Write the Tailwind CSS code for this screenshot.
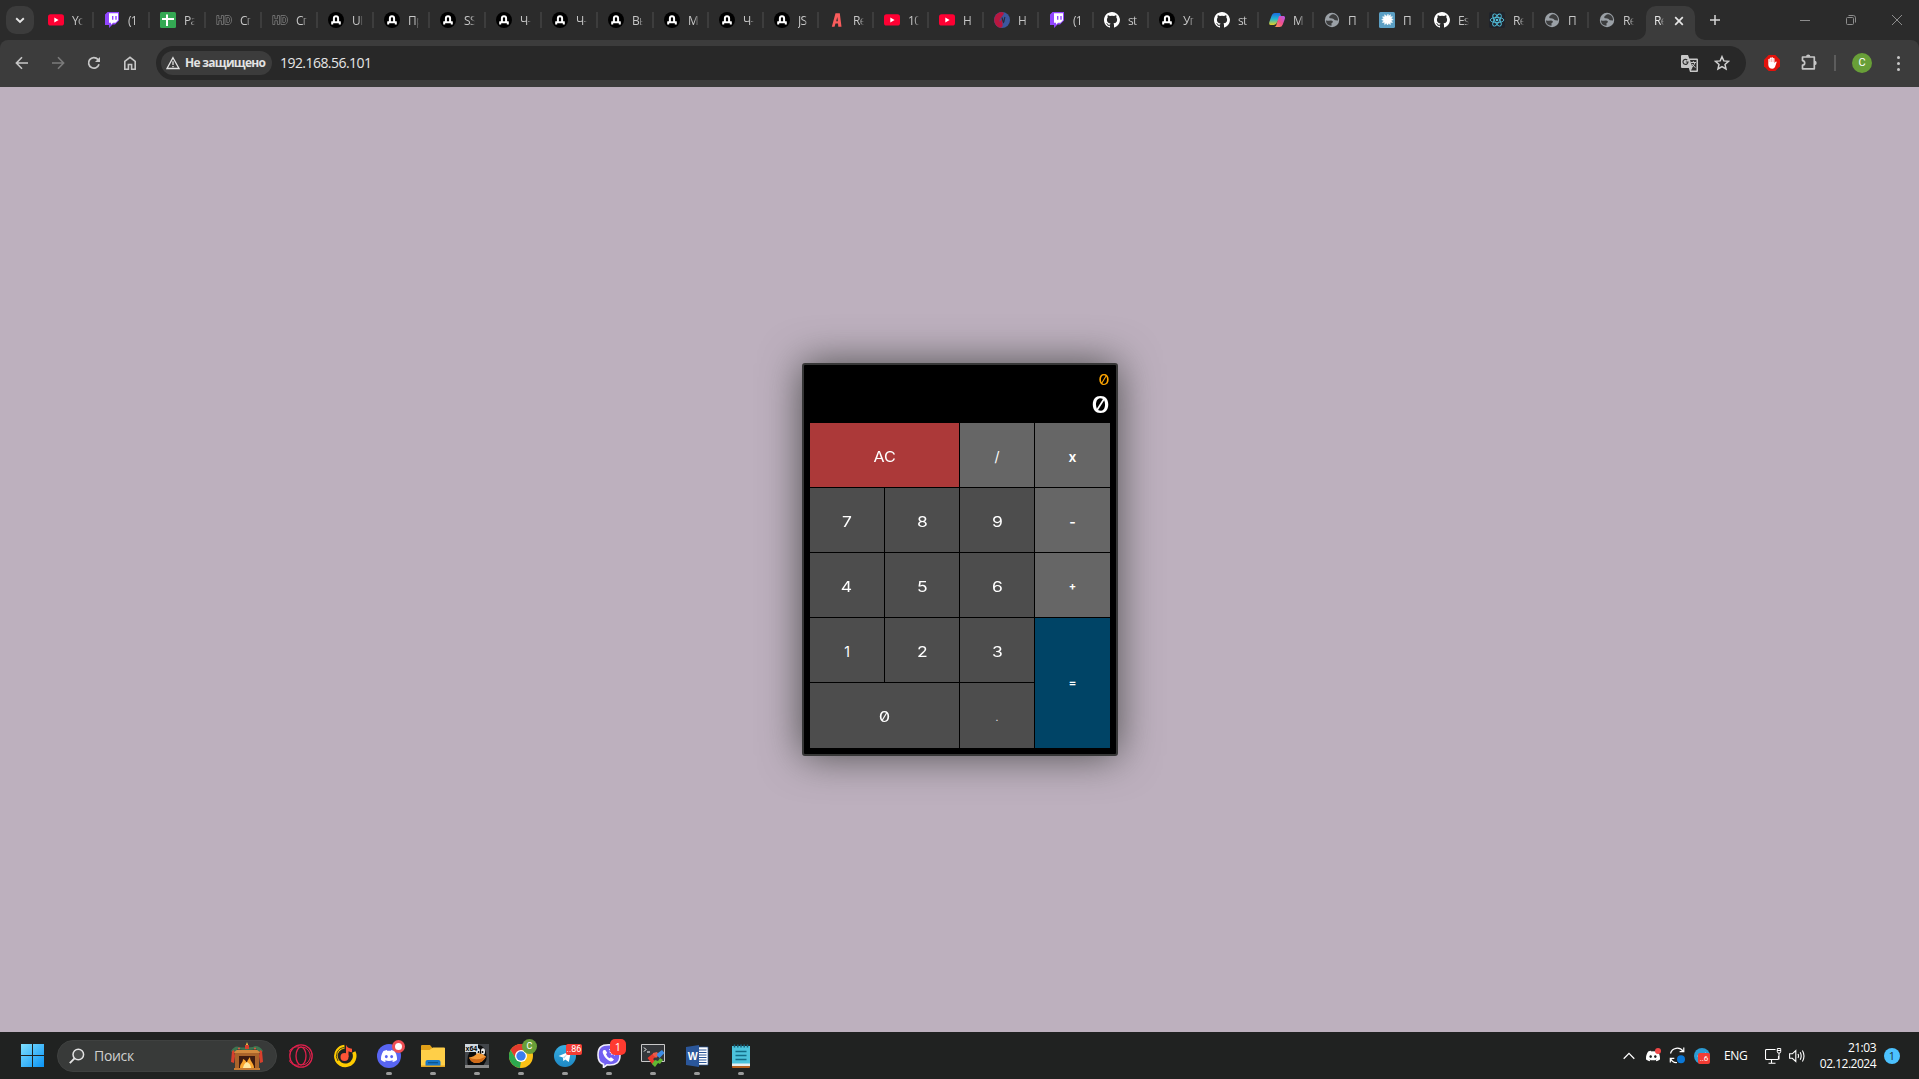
<!DOCTYPE html>
<html lang="ru">
<head>
<meta charset="utf-8">
<title>React Calculator</title>
<script src="https://cdn.jsdelivr.net/npm/@tailwindcss/browser@4"></script>
</head>
<body class="w-[1919px] h-[1079px] overflow-hidden flex flex-col bg-[#bdb0be] font-['Open_Sans','Noto_Sans',sans-serif]">
<svg class="absolute size-0">
  <defs>
    <linearGradient id="win" x1="0" y1="0" x2="1" y2="1"><stop offset="0" stop-color="#7fe0ff"/><stop offset="1" stop-color="#0a93f5"/></linearGradient>
    <linearGradient id="cpa" x1="0" y1="0" x2="0" y2="1"><stop offset="0" stop-color="#1a6be0"/><stop offset=".5" stop-color="#22b6d0"/><stop offset="1" stop-color="#e8d020"/></linearGradient>
    <linearGradient id="cpb" x1="1" y1="0" x2="0" y2="1"><stop offset="0" stop-color="#b05af0"/><stop offset=".5" stop-color="#f0508c"/><stop offset="1" stop-color="#ffa050"/></linearGradient>
    <linearGradient id="tg" x1="0" y1="0" x2="0" y2="1"><stop offset="0" stop-color="#37aee2"/><stop offset="1" stop-color="#1e88c4"/></linearGradient>
    <symbol id="yt" viewBox="0 0 16 16"><rect y="2.2" width="16" height="11.4" rx="2.6" fill="#ff0033"/><path d="M6.3 5.6 10.6 8l-4.300 2.400z" fill="#fff"/></symbol>
    <symbol id="tw" viewBox="0 0 16 16"><path d="M1 2.500 3.500 0H15v8.500l-4 4H8.500L5 16v-3H1z" fill="#9146ff"/><path d="M5 1.200h9v7l-2.500 2.500H9L7 12.700v-2H5z" fill="#fff"/><path d="M8 4h1.400v3.800H8zM11.300 4h1.400v3.800h-1.400z" fill="#9146ff"/></symbol>
    <symbol id="sh" viewBox="0 0 16 16"><rect width="16" height="16" rx="1.500" fill="#34a853"/><path d="M6 2.500h2V6h6v2H8v6H6V8H2V6h4z" fill="#fff"/></symbol>
    <symbol id="hd" viewBox="0 0 16 16"><path d="M.8 3.500h2v3.300h2.600V3.500h2v9h-2V8.700H2.800v3.800h-2zM9 3.500h3c2.200 0 3.500 1.600 3.500 4.500s-1.300 4.500-3.500 4.500H9zm1.800 1.800v5.400H12c1.200 0 1.700-1 1.700-2.700S13.200 5.300 12 5.300z" fill="#222" stroke="#808080" stroke-width=".8"/></symbol>
    <symbol id="d" viewBox="0 0 16 16"><circle cx="8" cy="8" r="8" fill="#000"/><path d="M4.200 12.400V9.600M11.800 12.400V9.600M3.500 10.300h9M5.900 10V6.200q0-2 2.100-2t2.100 2V10" fill="none" stroke="#fff" stroke-width="2"/></symbol>
    <symbol id="ra" viewBox="0 0 16 16"><path d="M6.500 1.300h4.300l1.700 13.400H9.300L9 11.500H6.500l-1 3.200H2.800zM8.300 5 7.200 9.200h1.700z" fill="#fa5c5c"/></symbol>
    <symbol id="hn" viewBox="0 0 16 16"><circle cx="8" cy="8" r="8" fill="#3c579f"/><path d="M8 0a8 8 0 0 0-2 15.700c2 .2 3-1.500 2.500-4L8 6.500c-1 1-1.500 3-2.500 3C5.500 6 9 4.500 10 1z" fill="#b8173f"/><path d="M8 5.500c.5 2 1 4 1.500 5C10.500 9 10 7 11 5" fill="none" stroke="#282b38" stroke-width="1.100"/></symbol>
    <symbol id="gh" viewBox="0 0 16 16"><path fill="#fff" d="M8 0C3.580 0 0 3.580 0 8c0 3.540 2.290 6.530 5.470 7.590.4.070.55-.17.55-.38v-1.490c-2.230.48-2.700-.95-2.700-.95-.36-.93-.89-1.170-.89-1.170-.73-.5.050-.49.050-.49.8.060 1.230.82 1.230.82.720 1.230 1.870.87 2.330.67.070-.52.280-.88.510-1.080-1.780-.2-3.640-.89-3.640-3.950 0-.87.310-1.590.820-2.150-.08-.2-.36-1.020.080-2.120 0 0 .670-.21 2.200.820a7.600 7.600 0 0 1 4 0c1.530-1.040 2.200-.82 2.200-.82.440 1.100.160 1.920.080 2.120.510.560.820 1.270.820 2.150 0 3.070-1.870 3.750-3.650 3.950.290.250.540.730.540 1.480v2.190c0 .21.150.46.550.38A8 8 0 0 0 8 0z"/></symbol>
    <symbol id="cp" viewBox="0 0 16 16"><path d="M6 1h5l1 3-5 8-2 1H1.500C0 13 0 11.500.3 10L2.500 4Q3.500 1 6 1z" fill="url(#cpa)"/><path d="M10 4h4.300c1.700 0 2 1.500 1.500 3l-2 5.500q-1 2.500-3.300 2.500H5.500c1.500-.5 1.700-1.500 2-2.500z" fill="url(#cpb)"/></symbol>
    <symbol id="gl" viewBox="0 0 16 16"><circle cx="8" cy="8" r="7.200" fill="#9aa0a6"/><path d="M2 8.600C4 9 6.500 8 8 8.700c1.800.8.500 2-.5 2.600v2.500C4 13.800 2 11.500 2 8.600zM8.500 2.300C7 3 5 4.200 5.200 5.500c.3 1.400 2.800.6 4 1.200 1 .7 1.300 1.700 2.800 1.600.9 0 1.700.4 2 .2C14.300 5 12 2.300 8.500 2.300z" fill="#2b2b2b" opacity=".85"/></symbol>
    <symbol id="vi" viewBox="0 0 16 16"><rect width="16" height="16" rx="1.500" fill="#5b9fc4"/><path d="m8 4 1-1.800.6 2 1.900-1.500-.3 2.200 2.300-.2-1.300 1.800 2 1.200-2.200.8 1.500 1.900-2.300-.1.200 2.300-1.900-1.400L8.600 13 7.500 11l-1.800 1.500v-2.200l-2.300.2 1.300-1.800-2-1.200 2.100-.8-1.300-1.900 2.300.1-.1-2.200 1.800 1.500z" fill="#fff" stroke="#fff" stroke-width=".6"/></symbol>
    <symbol id="re" viewBox="0 0 16 16"><rect width="16" height="16" rx="2" fill="#20232a"/><g fill="none" stroke="#53c1de" stroke-width=".9"><ellipse cx="8" cy="8" rx="6.800" ry="2.600"/><ellipse cx="8" cy="8" rx="6.800" ry="2.600" transform="rotate(60 8 8)"/><ellipse cx="8" cy="8" rx="6.800" ry="2.600" transform="rotate(120 8 8)"/></g><circle cx="8" cy="8" r="1.300" fill="#53c1de"/></symbol>
    <symbol id="disc" viewBox="0 0 24 24"><path fill="#fff" d="M20.300 4.400A19.800 19.800 0 0 0 15.400 2.900l-.6 1.300a18 18 0 0 0-5.500 0L8.600 2.900a19.700 19.700 0 0 0-4.900 1.500C.5 9-.3 13.600.1 18.100a19.900 19.900 0 0 0 6 3l1.300-2-1.900-.9.400-.3a14.200 14.200 0 0 0 12.200 0l.4.300-1.900.9 1.300 2a19.800 19.800 0 0 0 6-3c.500-5.200-.8-9.700-3.600-13.700zM8 15.300c-1.200 0-2.200-1.100-2.200-2.400s1-2.400 2.200-2.400 2.200 1.100 2.200 2.400-1 2.400-2.200 2.400zm8 0c-1.200 0-2.200-1.100-2.200-2.400s1-2.400 2.200-2.400 2.200 1.100 2.200 2.400-1 2.400-2.200 2.400z"/></symbol>
  </defs>
</svg>

<!-- tab strip -->
<header class="h-10 shrink-0 bg-[#2b2b2b] flex">
  <div class="w-[38px] pl-[6px] pt-[6px]"><div class="size-7 rounded-[10px] bg-[#3c3c3c] flex items-center justify-center"><svg class="size-3" viewBox="0 0 12 12"><path d="m2.200 4.200 3.800 3.700 3.800-3.700" fill="none" stroke="#e6e6e6" stroke-width="1.900"/></svg></div></div>
  <div id="tabs" class="flex"></div>
  <div class="relative ml-[29px] w-[49px] h-10 pt-[6px]">
    <div class="h-[34px] w-full rounded-t-[10px] bg-[#3c3c3c] flex items-center pb-[5px] pl-[8px]">
      <span class="w-[10px] overflow-hidden whitespace-nowrap text-xs tracking-[-0.7px] text-[#e8e8e8] mask-r-from-60%">React</span>
      <svg class="ml-[10px] size-[10px]" viewBox="0 0 10 10"><path d="m1.200 1.200 7.600 7.600m0-7.600L1.200 8.800" stroke="#e6e6e6" stroke-width="1.700"/></svg>
    </div>
    <svg class="absolute -left-[10px] bottom-0 size-[10px]" viewBox="0 0 10 10"><path d="M10 0v10H0A10 10 0 0 0 10 0" fill="#3c3c3c"/></svg>
    <svg class="absolute -right-[10px] bottom-0 size-[10px]" viewBox="0 0 10 10"><path d="M0 0v10h10A10 10 0 0 1 0 0" fill="#3c3c3c"/></svg>
  </div>
  <svg class="ml-[15px] mt-[15px] size-[10px]" viewBox="0 0 10 10"><path d="M5 0v10M0 5h10" stroke="#d6d6d6" stroke-width="1.500"/></svg>
  <div class="ml-auto flex pt-[15px] pr-[17px] gap-9 text-[#8d8d8d]">
    <svg class="size-[10px]" viewBox="0 0 10 10"><path d="M0 5.500h10" stroke="currentColor"/></svg>
    <svg class="size-[10px]" viewBox="0 0 10 10"><path d="M.5 3.500q0-1 1-1h5q1 0 1 1v5q0 1-1 1h-5q-1 0-1-1zM2.500.5h4.700q2.300 0 2.300 2.300v4.700" fill="none" stroke="currentColor"/></svg>
    <svg class="size-[10px]" viewBox="0 0 10 10"><path d="m0 0 10 10M10 0 0 10" stroke="currentColor"/></svg>
  </div>
</header>

<!-- address bar -->
<div class="h-[47px] shrink-0 bg-[#2b2b2b]">
  <div class="h-full bg-[#3c3c3c] rounded-t-lg flex items-center pb-[1px]">
    <svg class="ml-[15px] size-[14px] text-[#c7c7c7]" viewBox="0 0 14 14"><path d="M13 7H1.500M7 1.300 1.400 7 7 12.700" fill="none" stroke="currentColor" stroke-width="1.600"/></svg>
    <svg class="ml-[22px] size-[14px] text-[#7b7b7b]" viewBox="0 0 14 14"><path d="M1 7h11.500M7 1.300 12.600 7 7 12.700" fill="none" stroke="currentColor" stroke-width="1.600"/></svg>
    <svg class="ml-[22px] size-[14px] text-[#c7c7c7]" viewBox="0 0 14 14"><path d="M12 8.300A5.300 5.300 0 1 1 10.900 3.400L12.500 5" fill="none" stroke="currentColor" stroke-width="1.700"/><path d="M13 1v5H8z" fill="currentColor"/></svg>
    <svg class="ml-[22px] size-[14px] text-[#c7c7c7]" viewBox="0 0 14 14"><path d="M1.800 13.200V5.300L7 1.300l5.200 4v7.900H8.600V8.500H5.400v4.700z" fill="none" stroke="currentColor" stroke-width="1.600"/></svg>
    <div class="ml-[19px] h-[34px] w-[1590px] rounded-full bg-[#282828] flex items-center pl-[5px]">
      <div class="h-6 w-[111px] rounded-full bg-[#3c3c3c] flex items-center pl-[5px] text-[#e3e3e3]">
        <svg class="size-[14px]" viewBox="0 0 14 14"><path d="M7 1.700 13 12.500H1z" fill="none" stroke="currentColor" stroke-width="1.300"/><path d="M7 5.300v3.600M7 9.900v1.400" stroke="currentColor" stroke-width="1.300"/></svg>
        <span class="ml-[5px] text-xs font-bold tracking-[-0.7px] whitespace-nowrap">Не защищено</span>
      </div>
      <span class="ml-2 text-sm tracking-[-0.55px] text-[#e6e6e6]">192.168.56.101</span>
      <svg class="ml-auto mr-[16px] size-[17px]" viewBox="0 0 17 17"><path d="M1 0h6l1.300 3.500H16q1 0 1 1V16q0 1-1 1H9l-1.200-4H1q-1 0-1-1V1q0-1 1-1z" fill="#c7c7c7"/><path d="M9 5h6.500v10.500H10l1.500-3z" fill="#303030"/><path d="M6.200 5A2.500 2.500 0 1 0 7 7H4.800" fill="none" stroke="#303030" stroke-width="1.200"/><path d="M10 7.500h5M12.400 6.200v1.300M14 7.500q-.7 2.700-3 4.500M11 9q1 2 3.500 3.500" fill="none" stroke="#c7c7c7"/></svg>
      <svg class="mr-[16px] size-[16px]" viewBox="0 0 16 16"><path d="m8 1.700 1.800 4.200 4.700.4-3.500 3.100 1 4.500-4-2.400-4 2.400 1-4.500L1.500 6.300l4.700-.4z" fill="none" stroke="#d0d0d0" stroke-width="1.500"/></svg>
    </div>
    <svg class="ml-[18px] size-4" viewBox="0 0 16 16"><path d="M4.700 0h6.600L16 4.700v6.600L11.300 16H4.700L0 11.300V4.700z" fill="#e3120b"/><path d="M4.300 8.500V4.200q.8-.9 1.500 0V3q.8-1 1.600-.2Q8 1.700 9 2.500v.8q.9-.8 1.500.2V8l1-1.300q1.200-.5 1.200.4L11 12q-.8 1.700-2.600 1.700Q4.600 13.600 4.300 10z" fill="#fff"/><path d="M5.900 4v3M7.500 3.500V7M9.100 3.500V7" stroke="#e3120b" stroke-width=".3"/></svg>
    <svg class="ml-[20px] size-[18px]" viewBox="0 0 18 18"><path d="M2.500 3h11.800v11.800H2.500v-3.600q2.200-.3 2.200-2.300T2.500 6.600z" fill="none" stroke="#c7c7c7" stroke-width="1.700" stroke-linejoin="round"/><path d="M6 2.800a2.200 2.200 0 0 1 4.400 0zM14.500 6.700a2.200 2.200 0 0 1 0 4.400z" fill="#c7c7c7"/></svg>
    <div class="ml-[16px] w-[2px] h-4 bg-[#5c5c5c]"></div>
    <div class="ml-[16px] size-5 rounded-full bg-[#689f38] text-white text-[11px] leading-5 text-center font-['Roboto',sans-serif]">C</div>
    <div class="ml-[25px] flex flex-col gap-[3px]"><i class="size-[3px] rounded-full bg-[#c7c7c7]"></i><i class="size-[3px] rounded-full bg-[#c7c7c7]"></i><i class="size-[3px] rounded-full bg-[#c7c7c7]"></i></div>
  </div>
</div>

<!-- page -->
<main class="h-[945px] shrink-0 flex items-start justify-center pt-[276px] pl-[1px]">
  <div class="w-[316px] h-[393px] rounded-[3px] border-2 border-[#373737] bg-black px-[6px] shadow-[0_0_40px_#4d4d4d] text-white font-['Inter',sans-serif] slashed-zero">
    <div class="h-[58px] pt-[8px] flex flex-col items-end">
      <div class="h-[14px] text-[14px] leading-[14px] text-[#ffa500] scale-x-130 origin-right">0</div>
      <div class="mt-[6px] h-[24px] text-[23px] leading-[24px] font-medium scale-x-125 origin-right">0</div>
    </div>
    <div id="keys" class="grid grid-cols-[repeat(4,75px)] grid-rows-[repeat(5,65px)] text-sm"></div>
  </div>
</main>

<!-- taskbar -->
<footer class="h-[47px] shrink-0 bg-[#202221] flex items-center pl-[21px] text-white">
  <svg class="size-[23px]" viewBox="0 0 23 23"><path d="M0 0h11v11H0zM12 0h11v11H12zM0 12h11v11H0zM12 12h11v11H12z" fill="url(#win)"/></svg>
  <div class="ml-[13px] h-8 w-[220px] rounded-full bg-[#383a39] border border-[#3f4140] flex items-center pl-[11px] pr-[11px]">
    <svg class="size-4" viewBox="0 0 16 16"><circle cx="9.300" cy="6.500" r="5.300" fill="#4b4d4c" stroke="#e4e4e4" stroke-width="1.500"/><path d="m5.500 10.400-4.700 4.700" stroke="#e4e4e4" stroke-width="1.900"/></svg>
    <span class="ml-[9px] text-[14px] tracking-[-0.3px] text-[#cfcfcf]">Поиск</span>
    <svg class="ml-auto w-[36px] h-[28px]" viewBox="0 0 36 28"><path d="M6 10h24v17H6z" fill="#a9642b"/><path d="M5 8h26v3H5z" fill="#d28a3e"/><path d="M10 14h16v12H10z" fill="#3e1b10"/><path d="M11 26c0-5 3-5 3-9 3 1 3 3 4 4 0-3 2-4 3-6 0 5 4 6 4 11z" fill="#f9a52e"/><path d="M14 26q1-5 4-6 4 2 4 6z" fill="#ffe9a0"/><path d="M5 26h26v2H5z" fill="#c77b32"/><path d="M2 9q4-6 8-4 5 1 8 0 5 1 8-1 5 0 8 5l-2 2-5-4q-9 2-18 0l-5 4z" fill="#3d7550"/><path d="m3 9 2-1 1 6-1 7-3-1zM33 9l-2-1-1 6 1 7 3-1zM16 3h4v4h-4z" fill="#d8402c"/><path d="m18 0 1 3h-2z" fill="#ffcf4a"/><g fill="#e7573e"><circle cx="10" cy="6.500" r="1"/><circle cx="26" cy="6.500" r="1"/></g></svg>
  </div>
  <div class="ml-[2px] flex" id="apps">
    <div class="relative w-11 h-[47px] flex justify-center pt-[12px]"><svg class="size-6" viewBox="0 0 24 24"><g fill="none" stroke="#e0204c" stroke-width="1.300"><circle cx="12" cy="12" r="11.200"/><ellipse cx="12" cy="12" rx="5" ry="9"/><path d="M10 3a9.200 9.200 0 1 0 0 18M14 3a9.200 9.200 0 0 1 0 18" stroke-width="1"/></g></svg></div>
    <div class="relative w-11 h-[47px] flex justify-center pt-[12px]"><svg class="size-6" viewBox="0 0 24 24"><path d="M11.500 2.600A9.400 9.400 0 1 0 20.800 8" fill="none" stroke="#fc0" stroke-width="3.600"/><path d="M11.500 3.500A8.500 8.500 0 0 0 5 17" fill="none" stroke="#202221" stroke-width=".8"/><circle cx="11.500" cy="13" r="4" fill="#ff5436"/><path d="M13 13V0.800q1 3.500 6 4v3.500q-2 0-3.500-1V13z" fill="#ff5436"/></svg></div>
    <div class="relative w-11 h-[47px] flex justify-center pt-[12px]"><div class="size-6 rounded-full bg-[#5865f2] flex items-center justify-center"><svg class="size-4"><use href="#disc"/></svg></div><div class="absolute left-[25px] top-[8px] size-[13px] rounded-full bg-[#ed4f54] flex items-center justify-center"><i class="size-[7px] rounded-full bg-white"></i></div><i class="absolute left-[19px] top-[40px] w-[6px] h-[3px] rounded-full bg-[#9a9a9a]"></i></div>
    <div class="relative w-11 h-[47px] flex justify-center pt-[12px]"><svg class="size-6" viewBox="0 0 24 24"><path d="M0 2q0-1 1-1h8l2.500 3H23q1 0 1 1v6H0z" fill="#e0a018"/><path d="M0 6h8.500L12 3.500h11q1 0 1 1V22H0z" fill="#ffcf48"/><path d="M4.500 22v-4q0-2 2-2h11q2 0 2 2v4z" fill="#1877c8"/><path d="M7 18h10v1.300H7z" fill="#0b568f"/><path d="M0 21.500h24V23H0z" fill="#e5a520"/></svg><i class="absolute left-[19px] top-[40px] w-[6px] h-[3px] rounded-full bg-[#9a9a9a]"></i></div>
    <div class="relative w-11 h-[47px] flex justify-center pt-[12px]"><svg class="size-6" viewBox="0 0 24 24"><rect width="24" height="24" fill="#43474b"/><path d="M3 22Q1 14 5 7l4-5q6-3 10 2 4 6 2 13l-3 5z" fill="#0c0c0c"/><ellipse cx="13" cy="7.500" rx="2" ry="3.300" fill="#eee"/><ellipse cx="18" cy="7.500" rx="2" ry="3.300" fill="#eee"/><circle cx="13.500" cy="8" r="1"/><circle cx="17.500" cy="8" r="1"/><path d="M4 13.500q5-.5 8-4 4-1 9 3-3 6-9 6.500Q6 19 4 13.500z" fill="#f39a38"/><path d="M4 13.500q8 4 17-1-3 6-9 6.500Q6 19 4 13.500z" fill="#d06a18"/><path d="M0 21h24v3H0z" fill="#8a8a8a"/><rect width="13" height="8" fill="#cfd8df"/><text x=".5" y="7" font-size="7" font-weight="700" font-family="Liberation Sans">x64</text></svg><i class="absolute left-[19px] top-[40px] w-[6px] h-[3px] rounded-full bg-[#9a9a9a]"></i></div>
    <div class="relative w-11 h-[47px] flex justify-center pt-[12px]"><svg class="size-6" viewBox="0 0 24 24"><circle cx="12" cy="12" r="12" fill="#fbc116"/><path d="M1.600 6A12 12 0 0 1 22.400 6H12L7 15z" fill="#e33b2e"/><path d="M1.600 6 7 15l5 3-1 6A12 12 0 0 1 1.600 6z" fill="#2da94f"/><path d="m7 15 5 3.500L11.500 24l6-9z" fill="#fbc116"/><circle cx="12" cy="12" r="6" fill="#fff"/><circle cx="12" cy="12" r="4.700" fill="#3b7ded"/></svg><div class="absolute left-[23px] top-[7px] size-[15px] rounded-full bg-[#689f38] text-[9px] leading-[15px] text-center font-['Roboto',sans-serif]">C</div><i class="absolute left-[19px] top-[40px] w-[6px] h-[3px] rounded-full bg-[#9a9a9a]"></i></div>
    <div class="relative w-11 h-[47px] flex justify-center pt-[13px]"><svg class="size-[22px]" viewBox="0 0 22 22"><circle cx="11" cy="11" r="11" fill="url(#tg)"/><path d="m4.500 11 12.500-5-2.200 11-3.600-2.600-1.800 1.800-.5-3.600z" fill="#fff"/><path d="m8.900 12.600 5-4-3.700 5z" fill="#b9d8ec"/></svg><div class="absolute left-[23px] top-[12px] w-4 h-[11px] rounded-[2px] bg-[#f23c34] text-[9px] leading-[11px] text-center font-['Roboto',sans-serif]">..86</div><i class="absolute left-[19px] top-[40px] w-[6px] h-[3px] rounded-full bg-[#9a9a9a]"></i></div>
    <div class="relative w-11 h-[47px] flex justify-center pt-[12px]"><svg class="size-6" viewBox="0 0 24 24"><path d="M12 .8C4 .8 1 3.500 1 11c0 5 1.500 8 5.500 9.200v3.300l3.500-2.700c9 .8 13-1.800 13-9.800S20 .8 12 .8z" fill="#7360f2" stroke="#f1effe" stroke-width="1.600"/><path d="M7 6q-2 1-1 3.500Q8 15 13.500 17.500q2 .5 3.500-2l-3-2.300-1.500 1Q10 13 9 10.300l1.200-1.500L8.300 6z" fill="#fff"/><path d="M12 5.500q5 .5 5.500 6M12.500 8q2.300.3 2.600 3" fill="none" stroke="#fff"/></svg><div class="absolute left-[23px] top-[7px] size-4 rounded-[5px] bg-[#ff3b30] text-[11px] leading-4 text-center">1</div><i class="absolute left-[19px] top-[40px] w-[6px] h-[3px] rounded-full bg-[#9a9a9a]"></i></div>
    <div class="relative w-11 h-[47px] flex justify-center pt-[12px]"><svg class="size-6" viewBox="0 0 24 24"><path d="M.5.500h23v17H.5z" fill="#34373a" stroke="#c8c8c8"/><path d="m3 3.500 2 2-2 2M6 8h3" fill="none" stroke="#fff"/><path d="m6.500 14 5.500-4.500 3 3L12 15l2.500 3-3 2.500z" fill="#e9392c"/><path d="m12 9 4-1 2 3-3 3-3-3z" fill="#e95a4a"/><path d="m17 9 4-3 2.500 3-5 5-3-3z" fill="#3c8de6"/><path d="m11 20 3-4 3 1 2-3 3 2-3 4-2-1-3 4z" fill="#62b832"/></svg><i class="absolute left-[19px] top-[40px] w-[6px] h-[3px] rounded-full bg-[#9a9a9a]"></i></div>
    <div class="relative w-11 h-[47px] flex justify-center pt-[12px]"><svg class="size-6" viewBox="0 0 24 24"><path d="M12 3h11v18H12z" fill="#fff" stroke="#2b579a" stroke-width=".7"/><path d="M14 6h7.500M14 8.500h7.500M14 11h7.500M14 13.500h7.500M14 16h7.500M14 18.500h7.500" stroke="#2b579a" stroke-width="1.200"/><path d="m1 3 13-2v22L1 21z" fill="#2b579a"/><text x="2.800" y="16" font-size="10.500" font-weight="700" fill="#fff" font-family="Liberation Sans">W</text></svg><i class="absolute left-[19px] top-[40px] w-[6px] h-[3px] rounded-full bg-[#9a9a9a]"></i></div>
    <div class="relative w-11 h-[47px] flex justify-center pt-[12px]"><svg class="size-6" viewBox="0 0 24 24"><path d="M3 2h18v20H3z" fill="#4cc3dc"/><path d="M3 20.500h18V23q0 1-1 1H4q-1 0-1-1z" fill="#b5601f"/><path d="M3 19.500h18V22H3z" fill="#e7eef0"/><path d="M6.500 7.500h11M6.500 11.500h11M6.500 15.500h11" stroke="#136c86" stroke-width="1.600" fill="none"/><path d="M5.500.5v3M8.800.5v3M12 .5v3M15.200.5v3M18.500.5v3" stroke="#17637b" stroke-width="1.500"/></svg><i class="absolute left-[19px] top-[40px] w-[6px] h-[3px] rounded-full bg-[#9a9a9a]"></i></div>
  </div>
  <div class="ml-auto flex items-center pr-[19px]">
    <svg class="w-3 h-2" viewBox="0 0 12 8"><path d="m.7 6.700 5.300-5.300 5.300 5.300" fill="none" stroke="#fff" stroke-width="1.300"/></svg>
    <div class="relative ml-[11px] size-[14px]"><svg class="size-full"><use href="#disc"/></svg><i class="absolute left-[9px] -top-[1px] size-[6px] rounded-full bg-[#f04747]"></i></div>
    <svg class="ml-[9px] size-[17px]" viewBox="0 0 17 17"><path d="M1.500 6.500A7 7 0 0 1 14 4.200M14.800.5v4.200h-4.200M1.300 15.500v-4.200h4M1.500 11.500Q3.500 16 8 15.500" fill="none" stroke="#fff" stroke-width="1.200"/><circle cx="12" cy="12.300" r="4" fill="#0a78d7"/></svg>
    <div class="relative ml-[8px] size-4 rounded-full bg-[#2c9bd3]"><svg class="size-4" viewBox="0 0 16 16"><path d="m3 8 9-3.500-2 7z" fill="#fff"/></svg><div class="absolute left-[4px] top-[5px] h-[11px] w-[12px] rounded-[2px] bg-[#f23c34] text-[8px] leading-[11px] text-center font-['Roboto',sans-serif]">..6</div></div>
    <span class="ml-[14px] w-[24px] text-xs tracking-[-0.4px]">ENG</span>
    <svg class="ml-[17px] w-[17px] h-4" viewBox="0 0 17 16"><path d="M10.500 1.500h-9q-1 0-1 1v8q0 1 1 1h11q1 0 1-1V8M6.500 11.500v3.500M3.500 15.200h7" fill="none" stroke="#fff" stroke-width="1.100"/><path d="M12.300.5h3.400v3.300q0 1.300-1.700 1.300t-1.700-1.300zM14 5v6.500M12 2.500h4" fill="none" stroke="#fff"/></svg>
    <svg class="ml-[7px] w-[17px] h-[14px]" viewBox="0 0 17 14"><path d="M.6 4.800h2.700L6.800 1.500v11L3.300 9.300H.6zM9 5q1 2 0 4M11.200 3.300q2 3.700 0 7.400M13.400 1.500q3.200 5.500 0 11" fill="none" stroke="#fff" stroke-width="1.100"/></svg>
    <div class="ml-[10px] w-[60px] text-right text-xs leading-4 tracking-[-0.5px]">21:03<br>02.12.2024</div>
    <div class="ml-[8px] size-4 rounded-full bg-[#4cc2ff] text-[#1c3442] text-[11px] leading-4 text-center">1</div>
  </div>
</footer>
<script>
const tabs=[['yt','Yo'],['tw','(1'],['sh','Ра'],['hd','Сп'],['hd','Сп'],['d','UI'],['d','Пр'],['d','SS'],['d','Ч-'],['d','Ч-'],['d','Вы'],['d','М'],['d','Ч-'],['d','JS'],['ra','Re'],['yt','10'],['yt','Н'],['hn','Н'],['tw','(1'],['gh','st'],['d','Уп'],['gh','st'],['cp','М'],['gl','П'],['vi','П'],['gh','Es'],['re','Re'],['gl','П'],['gl','Re']];
document.getElementById('tabs').innerHTML=tabs.map(([ic,t],i)=>`<div class="${i<11?'w-14':'w-[55px]'} ${i>27?'mr-[-27px]':''} h-10 pl-[10px] flex items-center"><svg class="size-4 shrink-0"><use href="#${ic}"/></svg><span class="ml-2 mt-[1px] w-[11px] overflow-hidden whitespace-nowrap text-xs tracking-[-0.7px] text-[#c7c7c7] mask-r-from-60%">${t}</span><i class="${i>27?'hidden':''} ml-auto w-[2px] h-4 bg-[#3d3d3d]"></i></div>`).join('');
const keys=[['AC','col-span-2 bg-[#ac3939] border-r border-b'],['/','bg-[#666666] border-r border-b'],['x','bg-[#666666] border-b font-semibold'],['7','n'],['8','n'],['9','n'],['-','bg-[#666666] border-b font-semibold'],['4','n'],['5','n'],['6','n'],['+','bg-[#666666] border-b font-bold text-[11px]'],['1','n'],['2','n'],['3','n'],['=','row-span-2 bg-[#004466] font-semibold text-xs'],['0','col-span-2 bg-[#4d4d4d] border-r'],['.','bg-[#4d4d4d] border-r text-[10px]']];
const stretch=k=>k==='0'?'scale-x-130':/[2-9]/.test(k)?'scale-x-125':k==='AC'?'scale-x-115':'';
document.getElementById('keys').innerHTML=keys.map(([k,c])=>`<button class="border-black ${k==='='?'':'pt-[3px]'} ${c==='n'?'bg-[#4d4d4d] border-r border-b':c}"><span class="inline-block ${stretch(k)}">${k}</span></button>`).join('');
</script>
</body>
</html>
